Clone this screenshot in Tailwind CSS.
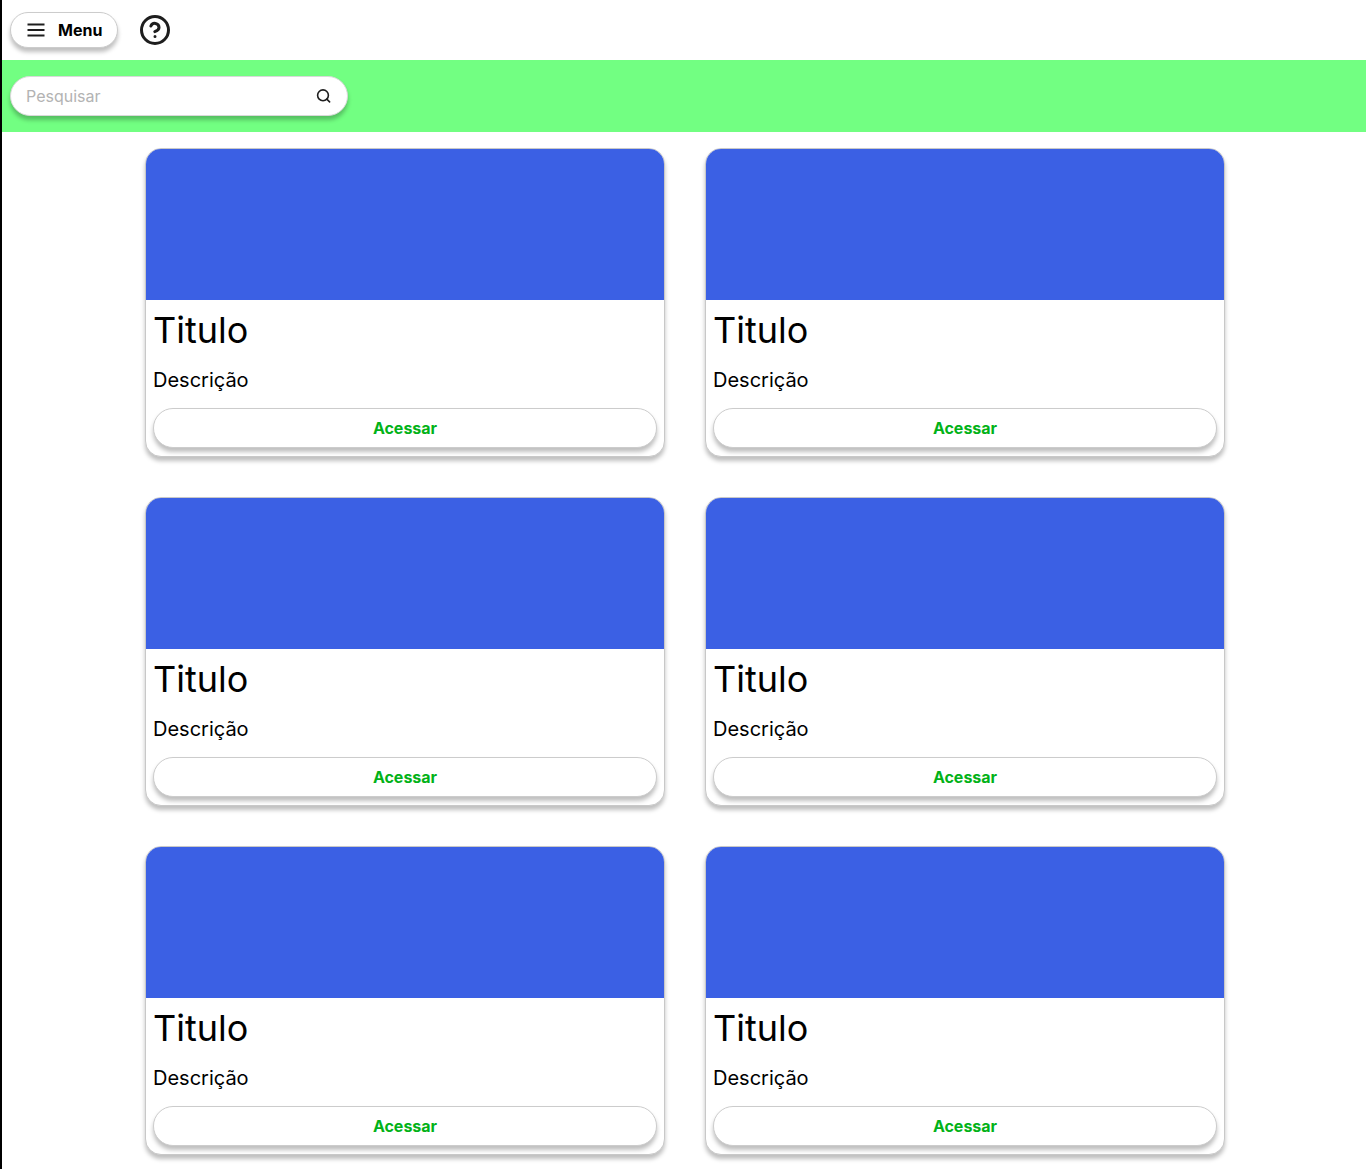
<!DOCTYPE html>
<html lang="pt-BR">
<head>
<meta charset="utf-8">
<meta name="viewport" content="width=device-width, initial-scale=1">
<title>Menu</title>
<script src="https://cdn.jsdelivr.net/npm/@tailwindcss/browser@4"></script>
</head>
<body class="min-h-screen border-l-2 border-black bg-white font-['Inter',sans-serif] text-black">
  <header class="flex h-15 items-center gap-5 px-2">
    <button type="button" class="flex h-9 items-center gap-3 rounded-full border border-[#cccccc] bg-white px-[15px] text-base font-bold shadow-[0_4px_4px_rgba(0,0,0,0.25)]">
      <svg class="h-5 w-5" viewBox="0 0 20 20" fill="none" stroke="#1e1e1e" stroke-width="1.8" aria-hidden="true"><path d="M1.5 4.5h17M1.5 10h17M1.5 15.5h17"/></svg>
      Menu
    </button>
    <button type="button" aria-label="Ajuda">
      <svg class="h-8 w-8" viewBox="0 0 32 32" fill="none" stroke="#1e1e1e" stroke-width="3" stroke-linecap="round" stroke-linejoin="round" aria-hidden="true"><circle cx="17" cy="16" r="13.5"/><path d="M12.9 12a4.2 4.2 0 0 1 8.1 1.4c0 2.8-4.2 4.2-4.2 4.2M17 22.6v.01"/></svg>
    </button>
  </header>

  <form role="search" class="flex h-18 items-center bg-[#72ff82] px-2">
    <div class="flex h-10 w-full max-w-[338px] items-center rounded-full border border-[#d9d9d9] bg-white px-[15px] shadow-[0_4px_4px_rgba(0,0,0,0.25)]">
      <input type="text" aria-label="Pesquisar" placeholder="Pesquisar" class="min-w-0 flex-1 text-base outline-none placeholder:text-[#b3b3b3]">
      <button type="submit" aria-label="Buscar">
        <svg class="h-4 w-4" viewBox="0 0 16 16" fill="none" stroke="#1e1e1e" stroke-width="1.6" stroke-linecap="round" stroke-linejoin="round" aria-hidden="true"><circle cx="7" cy="7.3" r="5.4"/><path d="m13.6 13.9-2.8-2.8"/></svg>
      </button>
    </div>
  </form>

  <main class="pt-4 pl-0.5">
    <div id="cards" class="mx-auto grid max-w-[1080px] grid-cols-1 gap-10 md:grid-cols-2"></div>
  </main>

  <template id="card">
    <article class="overflow-hidden rounded-2xl border border-[#c8c8c8] bg-white shadow-[0_4px_4px_rgba(0,0,0,0.25)]">
      <div class="h-[151px] bg-[#3b60e4]"></div>
      <div class="flex flex-col gap-4 px-[7px] py-2">
        <h2 class="text-4xl/11">Titulo</h2>
        <p class="text-xl/6">Descrição</p>
        <button type="button" class="h-10 rounded-full border border-[#cccccc] bg-white text-base font-bold text-[#02b218] shadow-[0_4px_4px_rgba(0,0,0,0.25)]">Acessar</button>
      </div>
    </article>
  </template>
  <script>
    const list = document.getElementById('cards');
    const card = document.getElementById('card');
    for (let i = 0; i < 6; i++) list.append(card.content.cloneNode(true));
  </script>
</body>
</html>
